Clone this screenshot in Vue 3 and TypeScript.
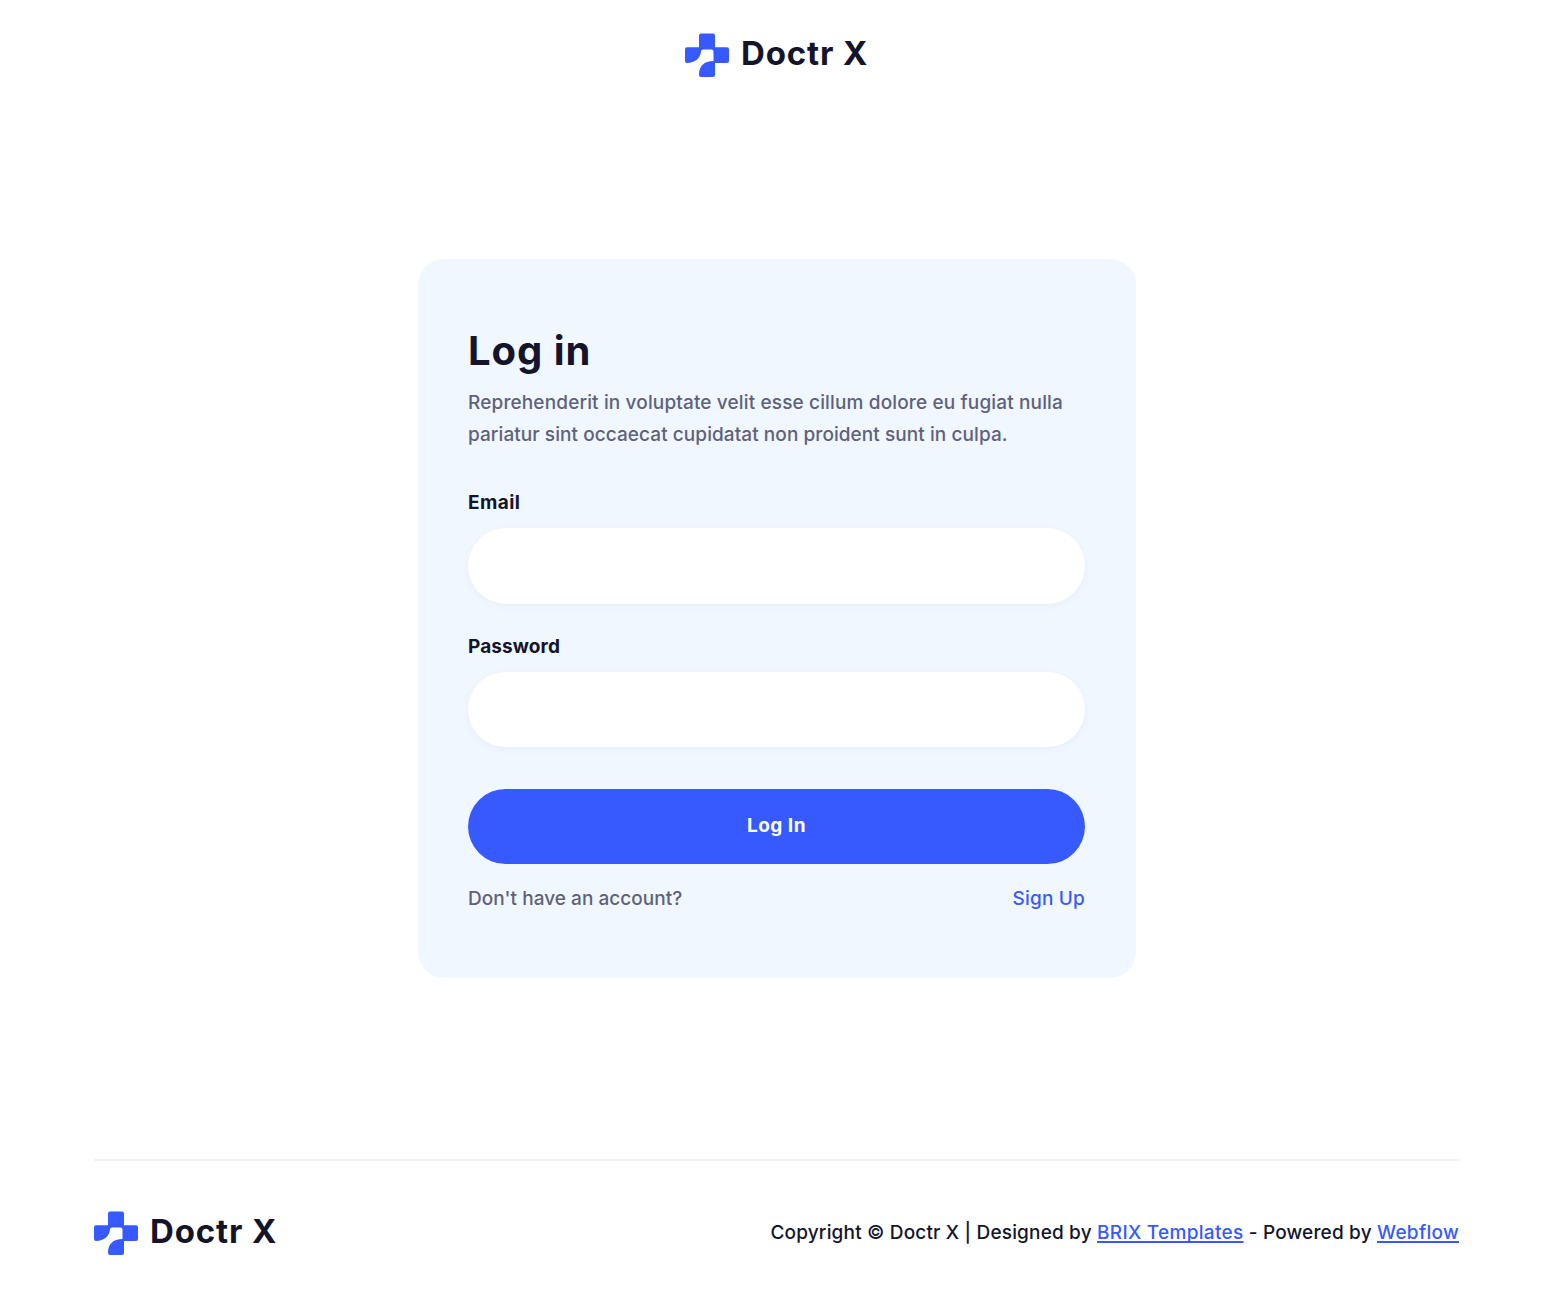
<script setup lang="ts">
import { ref, h, type FunctionalComponent } from 'vue'

interface Field {
  id: string
  label: string
  type: string
}

const fields: Field[] = [
  { id: 'email', label: 'Email', type: 'email' },
  { id: 'password', label: 'Password', type: 'password' },
]

const values = ref<Record<string, string>>({ email: '', password: '' })

const LogoMark: FunctionalComponent = () =>
  h('svg', { width: 44, height: 44, viewBox: '0 0 44 44', fill: '#365aff', 'aria-hidden': 'true' }, [
    h('path', {
      d: 'M16 0.5H28Q30 0.5 30 2.5V14.3H42Q44 14.3 44 16.3V28Q44 30 42 30H30V42Q30 44 28 44H16Q14 44 14 42C14 33 19 28 28.5 28V18.5Q28.5 16.5 26.5 16.5H18Q16 16.5 16 18.5C15.5 25 10 30 2 30Q0 30 0 28V16.3Q0 14.3 2 14.3H14V2.5Q14 0.5 16 0.5Z',
    }),
  ])
</script>

<template>
  <div class="page">
    <header class="header">
      <a class="logo"><LogoMark /><span class="logo-name">Doctr X</span></a>
    </header>

    <main class="main">
      <section class="card">
        <h1 class="title">Log in</h1>
        <p class="intro">
          <span class="line line-one">Reprehenderit in voluptate velit esse cillum dolore eu fugiat nulla</span>
          <span class="line line-two">pariatur sint occaecat cupidatat non proident sunt in culpa.</span>
        </p>
        <form @submit.prevent>
          <div v-for="field in fields" :key="field.id" class="field">
            <label :for="field.id" :class="['label', field.id]">{{ field.label }}</label>
            <input :id="field.id" v-model="values[field.id]" class="input" :type="field.type" />
          </div>
          <button class="submit" type="submit">Log In</button>
        </form>
        <div class="signup">
          <span class="question">Don't have an account?</span>
          <a class="signup-link">Sign Up</a>
        </div>
      </section>
    </main>

    <footer class="footer">
      <a class="logo"><LogoMark /><span class="logo-name">Doctr X</span></a>
      <p class="copyright">Copyright © Doctr X | Designed by <a>BRIX Templates</a> - Powered by <a>Webflow</a></p>
    </footer>
  </div>
</template>

<style>
body {
  margin: 0;
  background: #fff;
}
</style>

<style scoped>
.page {
  box-sizing: border-box;
  display: flex;
  flex-direction: column;
  height: 1304px;
  font-family: Metropolis, Inter, sans-serif;
  font-size: 19px;
  font-weight: 500;
  color: #14142b;
}

.header {
  display: flex;
  justify-content: center;
  padding-top: 33px;
  height: 226px;
}

.logo {
  display: flex;
  gap: 12px;
  height: 44px;
  width: 182px;
}

.logo svg {
  flex: none;
}

.logo-name {
  font-size: 33px;
  font-weight: 650;
  line-height: 40px;
  letter-spacing: 0.85px;
  white-space: nowrap;
}

.main {
  display: flex;
  justify-content: center;
  padding-left: 2px;
}

.card {
  box-sizing: border-box;
  width: 718px;
  height: 719px;
  padding: 67px 51px 0 50px;
  border-radius: 26px;
  background: #f0f7ff;
}

.title {
  margin: 0 0 11px;
  font-size: 40px;
  font-weight: 700;
  line-height: 50px;
  letter-spacing: 0.95px;
}

.intro {
  margin: 0 0 41px;
  line-height: 32px;
  color: #5f617a;
}

.line {
  display: block;
  white-space: nowrap;
}

.line-one {
  letter-spacing: 0.14px;
}

.line-two {
  letter-spacing: 0.07px;
}

.field {
  margin-bottom: 32px;
}

.label {
  display: block;
  margin-bottom: 14px;
  font-weight: 700;
  line-height: 22px;
}

.label.email {
  letter-spacing: 0.45px;
}

.label.password {
  letter-spacing: 0.1px;
}

.input {
  display: block;
  box-sizing: border-box;
  width: 100%;
  height: 75.5px;
  padding: 0 30px;
  border: 0;
  border-radius: 38px;
  outline: 0;
  background: #fff;
  box-shadow: 0 2px 8px rgba(20, 20, 110, 0.04);
  font: inherit;
  color: inherit;
}

.submit {
  display: block;
  box-sizing: border-box;
  width: 100%;
  height: 75px;
  margin-top: 42px;
  padding: 0 0 3px;
  border: 0;
  border-radius: 38px;
  background: #365aff;
  font: inherit;
  font-weight: 700;
  letter-spacing: 0.5px;
  color: #fff;
}

.signup {
  display: flex;
  justify-content: space-between;
  margin-top: 19px;
  line-height: 32px;
}

.question {
  letter-spacing: 0.04px;
  color: #5f617a;
}

.signup-link {
  letter-spacing: 0.2px;
}

.signup-link,
.copyright a {
  color: #365aff;
}

.footer {
  display: flex;
  justify-content: space-between;
  margin: 181px 93px 0 94px;
  padding-top: 50px;
  border-top: 2px solid #f1f1f3;
}

.copyright {
  margin: 6px 0 0;
  line-height: 32px;
  letter-spacing: 0.17px;
  white-space: nowrap;
}

.copyright a {
  letter-spacing: 0.3px;
  text-decoration: underline;
  text-decoration-thickness: 1.5px;
  text-underline-offset: 2px;
  text-decoration-skip-ink: none;
}
</style>
